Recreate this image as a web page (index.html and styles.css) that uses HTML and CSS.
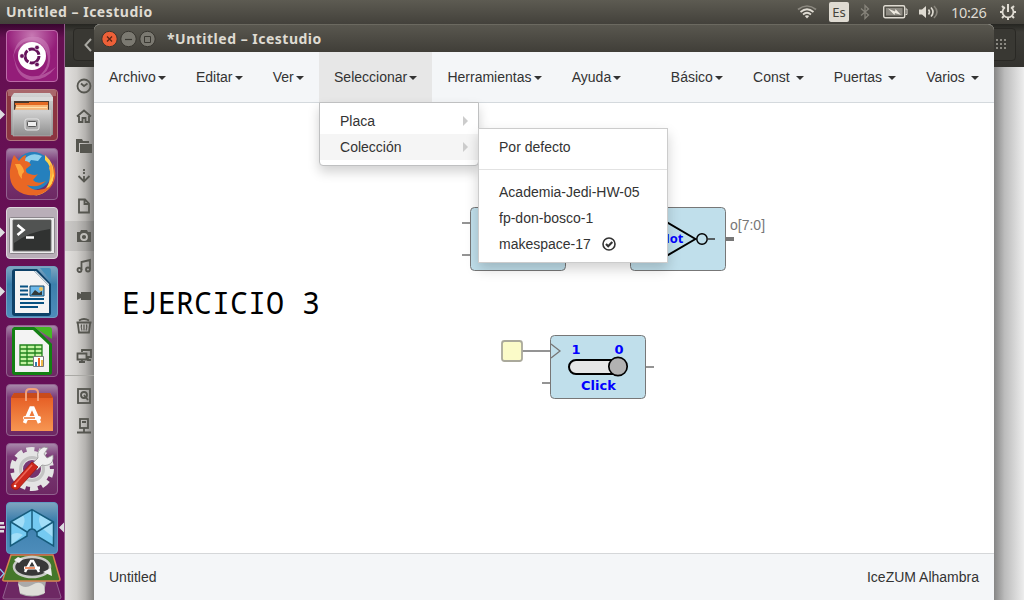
FILE: index.html
```html
<!DOCTYPE html>
<html lang="es">
<head>
<meta charset="utf-8">
<title>Icestudio</title>
<link rel="stylesheet" href="styles.css">
</head>
<body>
<div class="desktop">
<header class="panel">
  <span class="panel-title">Untitled – Icestudio</span>
  <div class="indicators">
    <svg class="wifi" width="20" height="16" viewBox="0 0 20 16" fill="none" stroke="#dfdbd2" stroke-width="1.7"><path d="M1 5.5Q10-1.5 19 5.5" stroke="#8c8980"/><path d="M3.5 8Q10 2.5 16.500 8M6 10.500Q10 7 14 10.500"/><path d="M7.800 12Q10 10.500 12.200 12L10 14.500z" fill="#dfdbd2" stroke="none"/></svg>
    <span class="keyboard">Es</span>
    <svg class="bluetooth" width="10" height="16" viewBox="0 0 10 16" fill="none" stroke="#87847b" stroke-width="1.3"><path d="M1 4.500L8.500 11 5 14.500V1.500L8.500 5 1 11.500"/></svg>
    <svg class="battery" width="25" height="14" viewBox="0 0 25 14"><rect x=".7" y=".7" width="21" height="12" rx="1.500" fill="none" stroke="#dfdbd2" stroke-width="1.400"/><rect x="3" y="3" width="16.500" height="7.500" fill="#8d8a82"/><path d="M22.500 4h1.500v5.500h-1.500" fill="none" stroke="#dfdbd2"/><path d="M5 3.500l7 3 .5-2.500 5.500 6-6-2-.5 2z" fill="#eee9df"/></svg>
    <svg class="volume" width="20" height="16" viewBox="0 0 20 16"><path d="M0 5.500h3L7 2v12l-4-3.500H0z" fill="#dfdbd2"/><path d="M9.500 5.500q2 2.500 0 5M12 3.500q4 4.500 0 9" fill="none" stroke="#dfdbd2" stroke-width="1.600"/><path d="M15 2q6 6 0 12" fill="none" stroke="#87847b" stroke-width="1.600"/></svg>
    <span class="clock">10:26</span>
    <svg class="session" width="18" height="18" viewBox="0 0 18 18" fill="none" stroke="#dfdbd2"><path d="M6 4.300a5.500 5.500 0 1 0 6 0" stroke-width="1.800"/><path d="M9 1v8" stroke-width="2"/><path d="M1 9h2.500M14.500 9h2.500M9 14.500v2.500M3 3l2 2M15 3l-2 2M3 15l2-2M15 15l-2-2" stroke-width="2"/></svg>
  </div>
</header>
<div class="workspace">
<nav class="launcher">
  <svg class="tile" viewBox="0 0 52 52"><defs><radialGradient id="purple" cx=".5" cy=".1"><stop stop-color="#c779b3"/><stop offset="1" stop-color="#941d79"/></radialGradient><linearGradient id="dim" x2="0" y2="1"><stop stop-color="#a98bac"/><stop offset=".25" stop-color="#7c3c78"/><stop offset="1" stop-color="#6d2863"/></linearGradient><linearGradient id="blue" x2="0" y2="1"><stop stop-color="#80a6c0"/><stop offset=".35" stop-color="#3c7eac"/><stop offset="1" stop-color="#4d8dbb"/></linearGradient><linearGradient id="grey" x2="0" y2="1"><stop stop-color="#d4d4d4"/><stop offset="1" stop-color="#8e8e8e"/></linearGradient><linearGradient id="orange" x2="0" y2="1"><stop stop-color="#e66026"/><stop offset="1" stop-color="#f79652"/></linearGradient></defs>
    <rect x=".5" y=".5" width="51" height="51" rx="3.500" fill="url(#purple)" stroke="#bd6ba9"/><path d="M7 30Q8 4 32 7q14 4 12 24-1 12-11 15 14-12 6-27Q32 7 18 12 8 18 7 30z" fill="#d492c5" opacity=".45"/><path d="M8 25q2 18 16 21 12 2 26-9-10 14-26 13Q9 47 8 25z" fill="#d492c5" opacity=".45"/><circle cx="26" cy="26" r="14" fill="#fff"/><circle cx="26" cy="26" r="7" fill="none" stroke="#65135b" stroke-width="3" stroke-dasharray="13.200 1.460"/><g fill="#65135b" stroke="#fff" stroke-width=".6"><circle cx="16" cy="26" r="2.300"/><circle cx="31" cy="17.500" r="2.300"/><circle cx="31" cy="34.500" r="2.300"/></g></svg>
  <svg class="tile" viewBox="0 0 52 52"><rect x=".5" y=".5" width="51" height="51" rx="3.500" fill="#8c3541" stroke="#b27881"/><path d="M2 1h48v6H2z" fill="#a9676b"/><path d="M8 4h36l3 4v38H5V8z" fill="url(#grey)"/><path d="M5 8h42v4H5z" fill="#d9d9d9"/><path d="M8 12h35v10H8z" fill="#49382d"/><path d="M9 14h14v-1h19v3H9z" fill="#e46a24"/><path d="M10 16h32v5H9z" fill="#f8b778"/><path d="M10 18h31v1H10z" fill="#ffe1ac"/><path d="M7 21h38v26H7z" fill="url(#grey)" stroke="#c4c4c4" stroke-width=".5"/><rect x="19" y="30" width="14" height="11" rx="2" fill="#aaa" stroke="#e7e7e7"/><rect x="21.500" y="32.500" width="9" height="5" rx="1" fill="#eee" stroke="#555"/></svg>
  <svg class="tile" viewBox="0 0 52 52"><rect x=".5" y=".5" width="51" height="51" rx="3.500" fill="url(#dim)" stroke="#92628f"/><circle cx="27" cy="23" r="19" fill="#2580bd"/><path d="M17 13Q24 3 36 8l-4 5-7-1-4 6z" fill="#8ed0ed"/><path d="M39 7q10 9 9 21-2 17-20 20 16-5 16-21 2-9-5-15z" fill="#ffd14a"/><path d="M6 12l2-5 5 6q3-5 7-6l-1 6q4 0 6 4l-5 4q-1 4 4 5 5 2 8 0l-5 6q4 5 13 1-8 8-19 4 8 9 22 2 4-3 5-11l-1-13q6 14-3 25-9 9-22 7Q2 43 4 22z" fill="#e96724"/><path d="M9 16l5 0q4 4 4 8-3 2-2 7-4-4-4-8zM45 15q4 10-1 18 1-8-1-13z" fill="#ffa63a"/></svg>
  <svg class="tile" viewBox="0 0 52 52"><rect x=".5" y=".5" width="51" height="51" rx="3.500" fill="#b9aeb8" stroke="#ddd5dc"/><rect x="3.500" y="10.500" width="45" height="36" rx="1" fill="#ececec" stroke="#8b858b"/><path d="M7 13h38v31H7z" fill="#303231" stroke="#777"/><path d="M8 14h36v8Q25 24 8 36z" fill="#515352"/><path d="M11.500 18l6 5-6 5M20 30.500h8" fill="none" stroke="#fff" stroke-width="2.700"/></svg>
  <svg class="tile" viewBox="0 0 52 52"><rect x=".5" y=".5" width="51" height="51" rx="3.500" fill="url(#blue)" stroke="#73a0c1"/><path d="M7 3h24l14 15v29q0 3-3 3H9q-3 0-3-3V6q0-3 3-3z" fill="#0d4168"/><path d="M34 2h9q2 0 2 3v10z" fill="#448eb9"/><path d="M9 5h19l15 15v27H9z" fill="#f4f4f4"/><path d="M28 5l15 15V18L30 5z" fill="#cfdae0"/><path d="M14 20.500h8M14 24.500h8M14 28.500h8M14 33h24M14 37h24M14 41h18" stroke="#075181" stroke-width="1.800"/><path d="M24 20h14v10H24z" fill="#6eb9ea" stroke="#164a6d"/><path d="M25 29l4-5 4 3 3-2v4z" fill="#333a38"/><circle cx="35" cy="23" r="2" fill="#edc158"/></svg>
  <svg class="tile" viewBox="0 0 52 52"><rect x=".5" y=".5" width="51" height="51" rx="3.500" fill="url(#dim)" stroke="#92628f"/><path d="M8 2h21l17 17v28q0 3-3 3H9q-3 0-3-3V4z" fill="#138013"/><path d="M28 2h15q3 0 3 3v9z" fill="#45b725"/><path d="M9 5h18l16 15v27H9z" fill="#f3f3f3"/><path d="M14 20h22v20H14z" fill="#c3f3a1"/><path d="M14 20h22v20H14zM14 24h22M14 28h22M14 32h22M14 36h22M21 20v20M29 20v20" fill="none" stroke="#20831c" stroke-width="1.300"/><path d="M27.500 31.500h10v10h-10z" fill="#fff" stroke="#777"/><path d="M29 37h2v4h-2z" fill="#347cad"/><path d="M32 33h2v8h-2z" fill="#eb6326"/><path d="M35 35h2v6h-2z" fill="#edb848"/></svg>
  <svg class="tile" viewBox="0 0 52 52"><rect x=".5" y=".5" width="51" height="51" rx="3.500" fill="url(#dim)" stroke="#92628f"/><path d="M8 9h36l3 5v33H5V14z" fill="#ec702a"/><path d="M5 14l3-5h36l3 5z" fill="#c94b1a"/><path d="M5 14h42v33H5z" fill="url(#orange)"/><path d="M20 17V9q0-4 4-4h4q4 0 4 4v8" fill="none" stroke="#f2a079" stroke-width="2"/><path d="M18.500 39l6.500-15h2l6.500 15" fill="none" stroke="#fff" stroke-width="3.600"/><rect x="17" y="32" width="18" height="4" rx="2" fill="#fff"/><path d="M18 34h11" stroke="#ed7631" stroke-width="1.500"/></svg>
  <svg class="tile" viewBox="0 0 52 52"><rect x=".5" y=".5" width="51" height="51" rx="3.500" fill="url(#dim)" stroke="#92628f"/><circle cx="26" cy="26" r="19.500" fill="none" stroke="#e4e4e4" stroke-width="5" stroke-dasharray="8 4.250"/><circle cx="26" cy="26" r="13.500" fill="none" stroke="#e4e4e4" stroke-width="9"/><circle cx="26" cy="26" r="11.500" fill="none" stroke="#c3c3c3" stroke-width="3"/><path d="M27 20l5-5q-2-8 6-11l4 1-4 6 3 4 6-3q1 8-5 10-3 1-6 0l-5 5z" fill="#efefef" stroke="#969696" stroke-width=".8"/><path d="M26 19l6 5-20 22q-3 2-6-1-2-3 1-5z" fill="#cc291d" stroke="#9f1711" stroke-width=".8"/><path d="M26 22L9 41" stroke="#ed6757" stroke-width="1.500"/><circle cx="9" cy="43" r="1.300" fill="#fff"/></svg>
  <svg class="tile" viewBox="0 0 52 52"><rect x=".5" y=".5" width="51" height="51" rx="3.500" fill="url(#blue)" stroke="#619bc3"/><path d="M4.500 20L26 7.500 47.500 20v24L31 34v-3q-2-4-5-4t-5 4v3L4.500 44z" fill="#75caf1"/><path d="M5 20l12-7q4 7-2 14zM34 13q-3 7 3 14l10 8V20zM5 33q6-4 12 0L5 43z" fill="#a2def8"/><path d="M4.500 20L26 7.500 47.500 20v24L31 34v-3q-2-4-5-4t-5 4v3L4.500 44zM26 7v20M5 20l16 10M47 20L31 30" fill="none" stroke="#175c7c" stroke-width="1.500"/></svg>
  <svg class="folded" viewBox="0 0 64 46"><path d="M8 27h48l5 16q0 2-2 2H5q-3 0-2-2z" fill="#6d2863" stroke="#92628f"/><path d="M18 27h28l-2 13q-12 5-24 0z" fill="#aaa"/><path d="M18 29q6 7 14 2t12 1l1 7q-12 5-25 0z" fill="#deded8"/><path d="M11 1h42l7 24q0 2-2 2H5q-3 0-2-2z" fill="#44772a" stroke="#d88350" stroke-width="1.500"/><ellipse cx="32" cy="13" rx="18" ry="10" fill="#383838" stroke="#c9cbc6" stroke-width="2.500"/><path d="M14 6l4-3 5 2-4 4zM43 18l8-4 1 8z" fill="#eee"/><path d="M25 18l6-11h2l6 11" fill="none" stroke="#fff" stroke-width="2.500"/><path d="M24 14h16" stroke="#fff" stroke-width="3"/><path d="M25 14h10" stroke="#e66b37" stroke-width="1.500"/></svg>
  <svg class="running-marks" width="64" height="576" viewBox="0 24 64 576" fill="#dddde0"><path d="M0 109.500l5 5-5 5zM0 227.500l5 5-5 5zM0 286.500l5 5-5 5zM64 522.500v10l-5-5zM0 522h4v2.500H0zM0 526h5v2.500H0zM0 530h4v2.500H0z"/><path d="M0 569l4 4.500-4 4.500" fill="none" stroke="#8bc8e9" stroke-width="1.300"/></svg>
</nav>
<section class="files">
  <div class="files-header"><span class="back"><svg width="8" height="14" viewBox="0 0 8 14"><path d="M7 1L1.500 7 7 13" fill="none" stroke="#aaa9a3" stroke-width="2"/></svg></span>
    <span class="grid-button"><svg width="11" height="11" viewBox="0 0 11 11" fill="#8b8982"><path d="M0 0h2v2H0zM4 0h2v2H4zM8 0h2v2H8zM0 4h2v2H0zM4 4h2v2H4zM8 4h2v2H8zM0 8h2v2H0zM4 8h2v2H4zM8 8h2v2H8z"/></svg></span></div>
  <div class="files-body">
    <div class="places">
      <i><svg viewBox="0 0 16 16"><circle cx="8" cy="8" r="6.500"/><path d="M5 5.500l3 2.500 3.500-2.500"/></svg></i>
      <i><svg viewBox="0 0 16 16"><path d="M1 8.500l7-6 7 6M3 8v6h3.500v-4h3v4H13V8"/></svg></i>
      <i><svg viewBox="0 0 16 16"><path class="solid" d="M0 1h6l1 2h6v2H3v9H0zM4 6h12v9H4z"/></svg></i>
      <i><svg viewBox="0 0 16 16"><path d="M2.500 8L8 13.500 13.500 8M8 13V8"/><path d="M8 1v6" stroke-dasharray="2 1"/></svg></i>
      <i><svg viewBox="0 0 16 16"><path d="M3 1.500h6l4 4v9H3zM8.500 2v4H13"/></svg></i>
      <i class="selected"><svg viewBox="0 0 16 16"><path class="solid" d="M1 4h3l1-2h6l1 2h3v10H1z"/><circle cx="8" cy="9" r="3" class="lens"/></svg></i>
      <i><svg viewBox="0 0 16 16"><path d="M5.500 12V4L14 2v9"/><circle cx="3.500" cy="12" r="2"/><circle cx="12" cy="11.500" r="2"/></svg></i>
      <i><svg viewBox="0 0 16 16"><path class="solid" d="M5 4h10v8H5v-2l-4 2V4l4 2z"/></svg></i>
      <i><svg viewBox="0 0 16 16"><path d="M.5 4.500h15M3 2.500Q8-.5 13 2.500M1.800 5l1.200 9.500h10L14.200 5"/><path d="M5.500 6.500q-.8 3 .5 6M10.500 6.500q.8 3-.5 6M8 6.500v6" stroke-width="1.200"/></svg></i>
      <i><svg viewBox="0 0 16 16"><path d="M6 4V2h9v7h-4M1.500 5.500h9v6h-9zM3 14h6M6 11v3M12 9v3h3"/></svg></i>
      <i class="volume-first"><svg viewBox="0 0 16 16"><rect x="2" y="1" width="12" height="14"/><circle cx="8" cy="7" r="3"/><path d="M8 7l4 5"/></svg></i>
      <i><svg viewBox="0 0 16 16"><rect x="4" y="1" width="8" height="9"/><path d="M6 4h4M8 10v4M1 14.500h14"/></svg></i>
    </div>
    <div class="files-edge"></div>
  </div>
</section>
</div>
<main class="window">
  <div class="titlebar">
    <svg class="controls" width="56" height="18" viewBox="0 0 56 18" fill="none"><circle cx="9.500" cy="9" r="7.700" fill="#ed6038" stroke="#37352f"/><path d="M7 6.500l5 5m0-5l-5 5" stroke="#5a2517" stroke-width="1.300"/><circle cx="28.500" cy="9" r="7.700" fill="#7b7971" stroke="#37352f"/><path d="M25 9.500h7" stroke="#3a3832" stroke-width="1.200"/><circle cx="47.500" cy="9" r="7.700" fill="#7b7971" stroke="#37352f"/><path d="M44.500 6.500h6v6h-6z" stroke="#3a3832"/></svg>
    <span class="window-title">*Untitled – Icestudio</span>
  </div>
  <nav class="navbar">
    <a>Archivo<b class="caret"></b></a><a>Editar<b class="caret"></b></a><a>Ver<b class="caret"></b></a>
    <div class="open-item"><a class="open">Seleccionar<b class="caret"></b></a>
      <div class="menu">
        <div class="menu-item">Placa<b class="arrow"></b></div>
        <div class="menu-item hover">Colección<b class="arrow"></b>
          <div class="submenu"><div class="menu-item">Por defecto</div><hr><div class="menu-item">Academia-Jedi-HW-05</div><div class="menu-item">fp-don-bosco-1</div><div class="menu-item checked">makespace-17<svg width="14" height="14" viewBox="0 0 14 14" fill="none" stroke="#333"><circle cx="7" cy="7" r="6" stroke-width="1.600"/><path d="M4 7l2.200 2.200L10.300 5" stroke-width="2.200"/></svg></div></div>
        </div>
      </div>
    </div>
    <a>Herramientas<b class="caret"></b></a><a>Ayuda<b class="caret"></b></a>
    <div class="nav-right"><a>Básico<b class="caret"></b></a><a>Const <b class="caret"></b></a><a>Puertas <b class="caret"></b></a><a>Varios <b class="caret"></b></a></div>
  </nav>
  <svg class="canvas" width="900" height="450" viewBox="94 103 900 450">
    <g stroke="#949494" stroke-width="2"><path d="M462 223h9M462 255h9M522 351h29M542 383h9M645 367h9"/><path d="M725 239h9" stroke="#777" stroke-width="4"/></g>
    <g fill="#c0dfeb" stroke="#777"><rect x="470.500" y="207.500" width="95" height="63" rx="4"/><rect x="630.500" y="207.500" width="95" height="63" rx="4"/><rect x="550.500" y="335.500" width="95" height="63" rx="4"/></g>
    <path d="M659 217.700L695.500 239 659 260.300z" fill="none" stroke="#000" stroke-width="2" stroke-linejoin="round"/><circle cx="702" cy="239" r="5.200" fill="none" stroke="#000" stroke-width="1.500"/><path d="M707 239h8" stroke="#333" stroke-width="1.500"/>
    <text class="not-label" x="683.500" y="243" text-anchor="end">Not</text><text class="port" x="730" y="230">o[7:0]</text>
    <rect x="502" y="341" width="20" height="20" rx="2.500" fill="#fbfbc8" stroke="#aaa99b" stroke-width="1.800"/>
    <path d="M551 344l9 7-9 7" fill="none" stroke="#777" stroke-width="1.300"/>
    <rect x="569" y="360" width="55" height="14" rx="7" fill="#e6e6e6" stroke="#000" stroke-width="2"/><circle cx="618" cy="366.500" r="9.200" fill="#b2b2b2" stroke="#000" stroke-width="1.700"/>
    <g class="gate"><text x="571.500" y="354">1</text><text x="614.500" y="354">0</text><text x="581" y="390" textLength="35">Click</text></g>
    <text class="exercise" x="122" y="314" textLength="198">EJERCICIO 3</text>
  </svg>
  <footer class="status"><span>Untitled</span><span>IceZUM Alhambra</span></footer>
</main>
</div>
</body>
</html>
```
FILE: styles.css
```css
* { box-sizing: border-box; }
body { margin: 0; font: 14px/20px "Liberation Sans", Arial, sans-serif; color: #333; overflow: hidden; }
svg { display: block; flex: none; }
.desktop { position: relative; width: 1024px; height: 600px; display: flex; flex-direction: column; overflow: hidden; background: #fff; }
.panel { height: 24px; flex: none; display: flex; align-items: center; justify-content: space-between; padding: 0 8px 0 6px; color: #dfdbd2; background: linear-gradient(#5d5b52, #43413b); }
.panel-title, .window-title { font: bold 14px/20px "Noto Sans", sans-serif; letter-spacing: .5px; color: #dfdbd2; white-space: nowrap; }
.indicators { display: flex; align-items: center; }
.keyboard { width: 20px; height: 20px; margin-left: 12px; border-radius: 2px; background: #dfdbd2; color: #44423b; font: 13px/21px "Noto Sans", sans-serif; text-align: center; }
.bluetooth { margin-left: 11px; }
.battery { margin-left: 13px; }
.volume { margin-left: 11px; }
.clock { width: 37px; margin-left: 12px; font: 14.5px/20px "Noto Sans", sans-serif; letter-spacing: -.3px; }
.session { margin-left: 11px; margin-right: -1px; }
.workspace { display: flex; flex: 1; min-height: 0; }
.launcher { position: relative; width: 65px; flex: none; padding: 6px 0 0 6px; display: flex; flex-direction: column; gap: 7px; background: linear-gradient(#38062f, #661052 14px, #65105a); border-right: 1px solid #955b8d; }
.tile { width: 52px; height: 52px; }
.folded { width: 64px; height: 46px; margin: -7px 0 0 -6px; }
.running-marks { position: absolute; left: 0; top: 0; }
.files { flex: 1; display: flex; flex-direction: column; }
.files-header { height: 43px; display: flex; justify-content: space-between; padding: 4px 8px 6px; background: linear-gradient(#252521, #3d3c37 8px, #33322e); }
.back, .grid-button { display: flex; align-items: center; width: 32px; border: 1px solid #292824; border-radius: 4px; background: #393833; }
.back { padding-left: 10px; }
.grid-button { justify-content: flex-end; padding-right: 8px; }
.files-body { flex: 1; display: flex; justify-content: space-between; }
.places { width: 29px; padding-top: 4px; background: linear-gradient(90deg, #e2e0de, #d2d0cd 40%, #b5b3b0 70%, #838280); }
.places i { display: flex; align-items: center; height: 30px; padding-left: 10.5px; }
.places svg { width: 16px; height: 16px; fill: none; stroke: #55554f; stroke-width: 1.8; }
.places .solid { fill: #55554f; stroke: none; }
.places .lens { fill: #55554f; stroke: #c0beba; }
.places .selected { background: rgba(0,0,0,.09); }
.places .volume-first { margin-top: 4px; border-top: 1px solid #aaa9a5; padding-top: 4px; height: 36px; }
.files-edge { width: 30px; background: linear-gradient(90deg, #858585, #bbb 35%, #ededed); }
.window { position: absolute; left: 94px; top: 24px; width: 900px; height: 576px; display: flex; flex-direction: column; border-radius: 6px 6px 0 0; background: #fff; }
.titlebar { height: 28px; flex: none; display: flex; align-items: center; padding-left: 6px; background: linear-gradient(#59574f, #403e38); border-radius: 6px 6px 0 0; border-top: 1px solid #6b6960; }
.window-title { margin-left: 11px; }
.navbar { height: 51px; flex: none; display: flex; background: #f4f6f8; border-bottom: 1px solid #d4d9dd; }
.navbar a { display: block; padding: 15px 15px; height: 50px; white-space: nowrap; }
.caret { display: inline-block; margin-left: 2.25px; border: 4px solid transparent; border-top-color: #333; border-bottom: 0; vertical-align: middle; }
.open-item { position: relative; }
.navbar .open { background: #e7e7e7; }
.nav-right { display: flex; margin-left: auto; }
.menu, .submenu { position: absolute; z-index: 2; background: #fff; border: 1px solid #bfc0c1; box-shadow: 0 6px 12px rgba(0,0,0,.18); }
.menu { left: 0; top: 50px; width: 160px; padding: 5px 0; border-radius: 0 0 4px 4px; }
.menu-item { position: relative; display: flex; align-items: center; height: 26px; padding: 0 10px 0 20px; white-space: nowrap; }
.hover { background: #f5f5f5; }
.arrow { margin-left: auto; border: 5px solid transparent; border-left-color: #ccc; border-right: 0; }
.submenu { left: 158px; top: -6px; width: 190px; padding: 5px 0; border-color: #ccc; }
.submenu hr { height: 1px; margin: 9px 0; border: 0; background: #e2e2e2; }
.checked svg { margin-left: 11px; }
.canvas { overflow: hidden; }
.gate { font: bold 13px "DejaVu Sans", sans-serif; fill: #00f; }
.not-label { font: bold 13px "Open Sans", sans-serif; fill: #00f; }
.port { font: 14px "Liberation Sans", sans-serif; fill: #777; }
.exercise { font: 30px "Noto Sans Mono", "DejaVu Sans Mono", monospace; fill: #000; }
.status { flex: 1; display: flex; align-items: flex-start; justify-content: space-between; padding: 13px 15px; background: #f4f6f8; border-top: 1px solid #d5d7d9; }
```
